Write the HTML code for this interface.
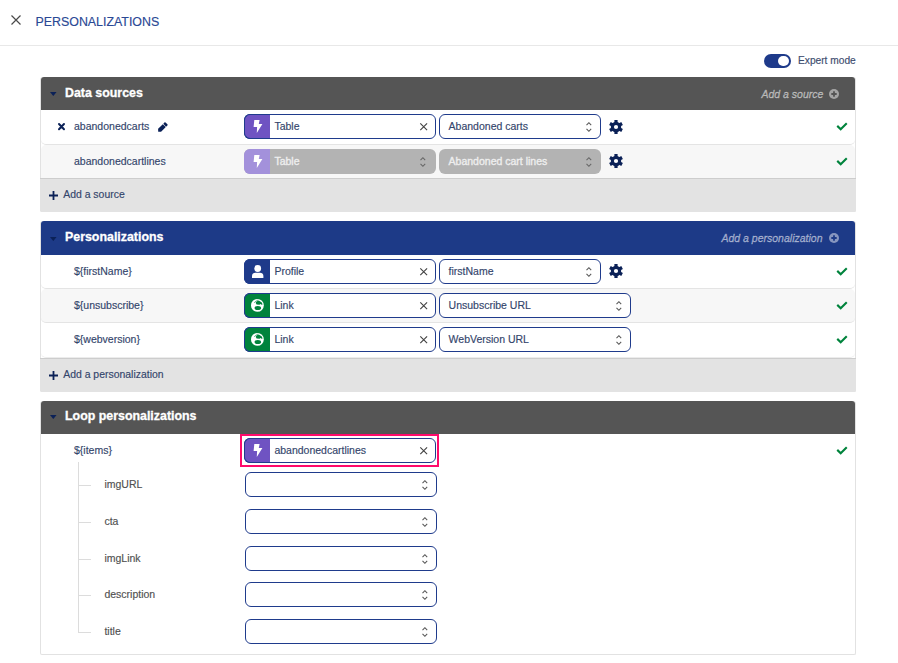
<!DOCTYPE html>
<html><head><meta charset="utf-8"><style>
html,body{margin:0;padding:0;width:898px;height:663px;overflow:hidden;background:#fff;font-family:"Liberation Sans", sans-serif;}
</style></head><body>
<svg style="position:absolute;left:11px;top:15px;overflow:visible" width="10" height="10" viewBox="0 0 10 10"><path d="M0.5 0.5L9.5 9.5M9.5 0.5L0.5 9.5" stroke="#4a4a4a" stroke-width="1.2" fill="none"/></svg>
<div style="position:absolute;left:35.5px;top:15.50px;font-size:12.4px;line-height:12.4px;color:#2a4894;font-weight:400;font-style:normal;white-space:nowrap;-webkit-text-stroke:0.15px #2a4894;">PERSONALIZATIONS</div>
<div style="position:absolute;left:0px;top:45px;width:898px;height:1px;background:#e8e8e8"></div>
<div style="position:absolute;left:764px;top:54px;width:27px;height:14px;background:#1e3a8a;border-radius:7px"></div>
<div style="position:absolute;left:778px;top:55.7px;width:10.6px;height:10.6px;background:#fff;border-radius:50%"></div>
<div style="position:absolute;left:798px;top:56.37px;font-size:10.2px;line-height:10.2px;color:#3d4c6e;font-weight:400;font-style:normal;white-space:nowrap;-webkit-text-stroke:0.15px #3d4c6e;">Expert mode</div>
<div style="position:absolute;left:40px;top:77px;width:816px;height:134.5px;box-sizing:border-box;border:1px solid #e2e2e2;border-top:0;border-radius:3px 3px 2px 2px;background:#fff"></div>
<div style="position:absolute;left:41px;top:77px;width:814px;height:33px;background:#555555;border-radius:3px 3px 0 0"></div>
<svg style="position:absolute;left:49.9px;top:92.3px;overflow:visible" width="6.6" height="3.9" viewBox="0 0 6.6 3.9"><path d="M0 0H6.6L3.3 3.9Z" fill="#0b2157"/></svg>
<div style="position:absolute;left:65px;top:86.80px;font-size:12.4px;line-height:12.4px;color:#fff;font-weight:700;font-style:normal;white-space:nowrap;-webkit-text-stroke:0.3px #fff;">Data sources</div>
<div style="position:absolute;left:761.5px;top:88.61px;font-size:10.5px;line-height:10.5px;color:rgba(255,255,255,0.47);font-weight:400;font-style:italic;white-space:nowrap;-webkit-text-stroke:0.35px rgba(255,255,255,0.47);">Add a source</div>
<svg style="position:absolute;left:829px;top:89.3px;overflow:visible" width="10" height="10" viewBox="0 0 10 10"><circle cx="5" cy="5" r="5" fill="rgba(255,255,255,0.47)"/><path d="M5 2.3V7.7M2.3 5H7.7" stroke="#555555" stroke-width="1.8"/></svg>
<div style="position:absolute;left:40px;top:178.0px;width:816px;height:33.5px;background:#e3e3e3;border-top:1px solid #cdcdcd;box-sizing:border-box;border-radius:0 0 2px 2px"></div>
<svg style="position:absolute;left:48.9px;top:190.8px;overflow:visible" width="9" height="9" viewBox="0 0 9 9"><path d="M4.5 0V9M0 4.5H9" stroke="#0b2157" stroke-width="1.8" fill="none"/></svg>
<div style="position:absolute;left:63.2px;top:190.25px;font-size:10.45px;line-height:10.45px;color:#33456b;font-weight:400;font-style:normal;white-space:nowrap;-webkit-text-stroke:0.15px #33456b;">Add a source</div>
<div style="position:absolute;left:41px;top:110.5px;width:814px;height:34px;background:#fff;border-bottom:1px solid #e4e4e4;box-sizing:border-box;border-radius:0 0 5px 5px"></div>
<svg style="position:absolute;left:58px;top:123.2px;overflow:visible" width="7" height="7.2" viewBox="0 0 7 7.2"><path d="M1 1L6 6.2M6 1L1 6.2" stroke="#0b2157" stroke-width="2.0" fill="none" stroke-linecap="round"/></svg>
<div style="position:absolute;left:74px;top:120.91px;font-size:10.5px;line-height:10.5px;color:#33456b;font-weight:400;font-style:normal;white-space:nowrap;-webkit-text-stroke:0.15px #33456b;">abandonedcarts</div>
<svg style="position:absolute;left:158px;top:121.8px;overflow:visible" width="10" height="10" viewBox="0 0 10 10"><g transform="translate(0.2 9.7) rotate(-45)"><path d="M0 0L2 -2.1H8.6V2.1H2Z" fill="#0b2157"/><rect x="9.1" y="-2.1" width="2.6" height="4.2" rx="0.8" fill="#0b2157"/></g></svg>
<div style="position:absolute;left:244px;top:114px;width:192px;height:25px;box-sizing:border-box;border:1px solid #1f3b8c;border-radius:6px;background:#fff;overflow:hidden"></div>
<div style="position:absolute;left:244px;top:114px;width:26px;height:25px;box-sizing:border-box;background:#6f53c2;border:1px solid #1f3b8c;border-right:0;border-radius:6px 0 0 6px"></div>
<div style="position:absolute;left:274.4px;top:121.11px;font-size:10.5px;line-height:10.5px;color:#33456b;font-weight:400;font-style:normal;white-space:nowrap;-webkit-text-stroke:0.15px #33456b;">Table</div>
<svg style="position:absolute;left:419.8px;top:123.1px;overflow:visible" width="7.4" height="7.4" viewBox="0 0 7.4 7.4"><path d="M0.3 0.3L7.1 7.1M7.1 0.3L0.3 7.1" stroke="#444" stroke-width="1.15" fill="none"/></svg>
<svg style="position:absolute;left:252.5px;top:120px;overflow:visible" width="9" height="13" viewBox="0 0 9 13"><path d="M1.3 0H6.6L5.8 4H9.4L3.8 12.9L4.1 7H0.6Z" fill="#fff"/></svg>
<div style="position:absolute;left:439px;top:114px;width:162px;height:25px;box-sizing:border-box;border:1px solid #1f3b8c;border-radius:6px;background:#fff"></div>
<div style="position:absolute;left:448.6px;top:121.11px;font-size:10.5px;line-height:10.5px;color:#33456b;font-weight:400;font-style:normal;white-space:nowrap;-webkit-text-stroke:0.15px #33456b;">Abandoned carts</div>
<svg style="position:absolute;left:585.5px;top:121.5px;overflow:visible" width="6" height="10" viewBox="0 0 6 10"><path d="M0.5 3.1L2.9 0.7L5.2 3.1M0.5 6.8L2.9 9.3L5.2 6.8" stroke="#555" stroke-width="1.05" fill="none"/></svg>
<svg style="position:absolute;left:609.3px;top:120px;overflow:visible" width="14" height="14" viewBox="0 0 14 14"><g transform="translate(7 7)"><rect x="-1.6" y="-7" width="3.2" height="3" transform="rotate(0)" fill="#0b2157"/><rect x="-1.6" y="-7" width="3.2" height="3" transform="rotate(60)" fill="#0b2157"/><rect x="-1.6" y="-7" width="3.2" height="3" transform="rotate(120)" fill="#0b2157"/><rect x="-1.6" y="-7" width="3.2" height="3" transform="rotate(180)" fill="#0b2157"/><rect x="-1.6" y="-7" width="3.2" height="3" transform="rotate(240)" fill="#0b2157"/><rect x="-1.6" y="-7" width="3.2" height="3" transform="rotate(300)" fill="#0b2157"/><circle r="5.2" fill="#0b2157"/><circle r="2.1" fill="#fff"/></g></svg>
<svg style="position:absolute;left:837px;top:122.7px;overflow:visible" width="10" height="8" viewBox="0 0 10 8"><path d="M1 3.6L3.7 6.2L9 1" stroke="#00833c" stroke-width="2.1" fill="none" stroke-linecap="square"/></svg>
<div style="position:absolute;left:41px;top:145px;width:814px;height:33px;background:#f7f7f7;border-radius:5px 5px 0 0"></div>
<div style="position:absolute;left:74px;top:155.81px;font-size:10.5px;line-height:10.5px;color:#33456b;font-weight:400;font-style:normal;white-space:nowrap;-webkit-text-stroke:0.15px #33456b;">abandonedcartlines</div>
<div style="position:absolute;left:244px;top:149px;width:192px;height:25px;background:#b3b3b3;border-radius:6px;overflow:hidden"></div>
<div style="position:absolute;left:244px;top:149px;width:26px;height:25px;background:#a391db;border-radius:6px 0 0 6px"></div>
<svg style="position:absolute;left:420px;top:157px;overflow:visible" width="6" height="10" viewBox="0 0 6 10"><path d="M0.5 3.1L2.9 0.7L5.2 3.1M0.5 6.8L2.9 9.3L5.2 6.8" stroke="#666" stroke-width="1.05" fill="none"/></svg>
<div style="position:absolute;left:274.4px;top:156.11px;font-size:10.5px;line-height:10.5px;color:#eeeeee;font-weight:400;font-style:normal;white-space:nowrap;-webkit-text-stroke:0.35px #eeeeee;">Table</div>
<svg style="position:absolute;left:252.5px;top:155px;overflow:visible" width="9" height="13" viewBox="0 0 9 13"><path d="M1.3 0H6.6L5.8 4H9.4L3.8 12.9L4.1 7H0.6Z" fill="#fff"/></svg>
<div style="position:absolute;left:439px;top:149px;width:162px;height:25px;background:#b3b3b3;border-radius:6px"></div>
<div style="position:absolute;left:448.6px;top:156.11px;font-size:10.5px;line-height:10.5px;color:#eeeeee;font-weight:400;font-style:normal;white-space:nowrap;-webkit-text-stroke:0.35px #eeeeee;">Abandoned cart lines</div>
<svg style="position:absolute;left:585.5px;top:156.5px;overflow:visible" width="6" height="10" viewBox="0 0 6 10"><path d="M0.5 3.1L2.9 0.7L5.2 3.1M0.5 6.8L2.9 9.3L5.2 6.8" stroke="#666" stroke-width="1.05" fill="none"/></svg>
<svg style="position:absolute;left:609.3px;top:154px;overflow:visible" width="14" height="14" viewBox="0 0 14 14"><g transform="translate(7 7)"><rect x="-1.6" y="-7" width="3.2" height="3" transform="rotate(0)" fill="#0b2157"/><rect x="-1.6" y="-7" width="3.2" height="3" transform="rotate(60)" fill="#0b2157"/><rect x="-1.6" y="-7" width="3.2" height="3" transform="rotate(120)" fill="#0b2157"/><rect x="-1.6" y="-7" width="3.2" height="3" transform="rotate(180)" fill="#0b2157"/><rect x="-1.6" y="-7" width="3.2" height="3" transform="rotate(240)" fill="#0b2157"/><rect x="-1.6" y="-7" width="3.2" height="3" transform="rotate(300)" fill="#0b2157"/><circle r="5.2" fill="#0b2157"/><circle r="2.1" fill="#fff"/></g></svg>
<svg style="position:absolute;left:837px;top:157.7px;overflow:visible" width="10" height="8" viewBox="0 0 10 8"><path d="M1 3.6L3.7 6.2L9 1" stroke="#00833c" stroke-width="2.1" fill="none" stroke-linecap="square"/></svg>
<div style="position:absolute;left:40px;top:221px;width:816px;height:170.5px;box-sizing:border-box;border:1px solid #e2e2e2;border-top:0;border-radius:3px 3px 2px 2px;background:#fff"></div>
<div style="position:absolute;left:41px;top:221px;width:814px;height:34px;background:#1d3a87;border-radius:3px 3px 0 0"></div>
<svg style="position:absolute;left:49.9px;top:236.5px;overflow:visible" width="6.6" height="3.9" viewBox="0 0 6.6 3.9"><path d="M0 0H6.6L3.3 3.9Z" fill="#0b2157"/></svg>
<div style="position:absolute;left:65px;top:230.80px;font-size:12.4px;line-height:12.4px;color:#fff;font-weight:700;font-style:normal;white-space:nowrap;-webkit-text-stroke:0.3px #fff;">Personalizations</div>
<div style="position:absolute;left:721.5px;top:232.61px;font-size:10.5px;line-height:10.5px;color:rgba(255,255,255,0.47);font-weight:400;font-style:italic;white-space:nowrap;-webkit-text-stroke:0.35px rgba(255,255,255,0.47);">Add a personalization</div>
<svg style="position:absolute;left:829px;top:233.3px;overflow:visible" width="10" height="10" viewBox="0 0 10 10"><circle cx="5" cy="5" r="5" fill="rgba(255,255,255,0.47)"/><path d="M5 2.3V7.7M2.3 5H7.7" stroke="#1d3a87" stroke-width="1.8"/></svg>
<div style="position:absolute;left:40px;top:358.0px;width:816px;height:33.5px;background:#e3e3e3;border-top:1px solid #cdcdcd;box-sizing:border-box;border-radius:0 0 2px 2px"></div>
<svg style="position:absolute;left:48.9px;top:370.8px;overflow:visible" width="9" height="9" viewBox="0 0 9 9"><path d="M4.5 0V9M0 4.5H9" stroke="#0b2157" stroke-width="1.8" fill="none"/></svg>
<div style="position:absolute;left:63.2px;top:370.25px;font-size:10.45px;line-height:10.45px;color:#33456b;font-weight:400;font-style:normal;white-space:nowrap;-webkit-text-stroke:0.15px #33456b;">Add a personalization</div>
<div style="position:absolute;left:41px;top:255px;width:814px;height:34px;background:#fff;border-bottom:1px solid #e4e4e4;box-sizing:border-box;border-radius:5px"></div>
<div style="position:absolute;left:74px;top:266.31px;font-size:10.5px;line-height:10.5px;color:#33456b;font-weight:400;font-style:normal;white-space:nowrap;-webkit-text-stroke:0.15px #33456b;">${firstName}</div>
<div style="position:absolute;left:244px;top:259px;width:192px;height:25px;box-sizing:border-box;border:1px solid #1f3b8c;border-radius:6px;background:#fff;overflow:hidden"></div>
<div style="position:absolute;left:244px;top:259px;width:26px;height:25px;box-sizing:border-box;background:#1e3a8a;border:1px solid #1f3b8c;border-right:0;border-radius:6px 0 0 6px"></div>
<div style="position:absolute;left:274.4px;top:266.11px;font-size:10.5px;line-height:10.5px;color:#33456b;font-weight:400;font-style:normal;white-space:nowrap;-webkit-text-stroke:0.15px #33456b;">Profile</div>
<svg style="position:absolute;left:419.8px;top:268.1px;overflow:visible" width="7.4" height="7.4" viewBox="0 0 7.4 7.4"><path d="M0.3 0.3L7.1 7.1M7.1 0.3L0.3 7.1" stroke="#444" stroke-width="1.15" fill="none"/></svg>
<svg style="position:absolute;left:251.8px;top:264.8px;overflow:visible" width="11.4" height="13" viewBox="0 0 11.4 13"><circle cx="5.7" cy="3.5" r="3.4" fill="#fff"/><path d="M0 13V10.8C0 8.6 1.6 7.7 3.4 7.7H8C9.8 7.7 11.4 8.6 11.4 10.8V13Z" fill="#fff"/></svg>
<div style="position:absolute;left:439px;top:259px;width:162px;height:25px;box-sizing:border-box;border:1px solid #1f3b8c;border-radius:6px;background:#fff"></div>
<div style="position:absolute;left:448.6px;top:266.11px;font-size:10.5px;line-height:10.5px;color:#33456b;font-weight:400;font-style:normal;white-space:nowrap;-webkit-text-stroke:0.15px #33456b;">firstName</div>
<svg style="position:absolute;left:585.5px;top:266.5px;overflow:visible" width="6" height="10" viewBox="0 0 6 10"><path d="M0.5 3.1L2.9 0.7L5.2 3.1M0.5 6.8L2.9 9.3L5.2 6.8" stroke="#555" stroke-width="1.05" fill="none"/></svg>
<svg style="position:absolute;left:609.3px;top:264px;overflow:visible" width="14" height="14" viewBox="0 0 14 14"><g transform="translate(7 7)"><rect x="-1.6" y="-7" width="3.2" height="3" transform="rotate(0)" fill="#0b2157"/><rect x="-1.6" y="-7" width="3.2" height="3" transform="rotate(60)" fill="#0b2157"/><rect x="-1.6" y="-7" width="3.2" height="3" transform="rotate(120)" fill="#0b2157"/><rect x="-1.6" y="-7" width="3.2" height="3" transform="rotate(180)" fill="#0b2157"/><rect x="-1.6" y="-7" width="3.2" height="3" transform="rotate(240)" fill="#0b2157"/><rect x="-1.6" y="-7" width="3.2" height="3" transform="rotate(300)" fill="#0b2157"/><circle r="5.2" fill="#0b2157"/><circle r="2.1" fill="#fff"/></g></svg>
<svg style="position:absolute;left:837px;top:267.7px;overflow:visible" width="10" height="8" viewBox="0 0 10 8"><path d="M1 3.6L3.7 6.2L9 1" stroke="#00833c" stroke-width="2.1" fill="none" stroke-linecap="square"/></svg>
<div style="position:absolute;left:41px;top:289px;width:814px;height:34px;background:#f7f7f7;border-bottom:1px solid #e4e4e4;box-sizing:border-box;border-radius:5px"></div>
<div style="position:absolute;left:74px;top:300.31px;font-size:10.5px;line-height:10.5px;color:#33456b;font-weight:400;font-style:normal;white-space:nowrap;-webkit-text-stroke:0.15px #33456b;">${unsubscribe}</div>
<div style="position:absolute;left:244px;top:293px;width:192px;height:25px;box-sizing:border-box;border:1px solid #1f3b8c;border-radius:6px;background:#fff;overflow:hidden"></div>
<div style="position:absolute;left:244px;top:293px;width:26px;height:25px;box-sizing:border-box;background:#00833c;border:1px solid #1f3b8c;border-right:0;border-radius:6px 0 0 6px"></div>
<div style="position:absolute;left:274.4px;top:300.11px;font-size:10.5px;line-height:10.5px;color:#33456b;font-weight:400;font-style:normal;white-space:nowrap;-webkit-text-stroke:0.15px #33456b;">Link</div>
<svg style="position:absolute;left:419.8px;top:302.1px;overflow:visible" width="7.4" height="7.4" viewBox="0 0 7.4 7.4"><path d="M0.3 0.3L7.1 7.1M7.1 0.3L0.3 7.1" stroke="#444" stroke-width="1.15" fill="none"/></svg>
<svg style="position:absolute;left:251.2px;top:299.1px;overflow:visible" width="12.8" height="12.8" viewBox="0 0 12.8 12.8"><circle cx="6.4" cy="6.4" r="6.4" fill="#fff"/><path d="M5 3.2L7 1.6L8.2 1.8L10.8 3.4L11.6 5.4L10.6 5.8L9.4 5L8.6 5.8L5.6 5.6L4.9 4.3Z" fill="#00833c"/><path d="M3.3 3.6L6.8 1.1" stroke="#00833c" stroke-width="0.7"/><ellipse cx="6.8" cy="9" rx="3.3" ry="2" fill="#00833c"/></svg>
<div style="position:absolute;left:439px;top:293px;width:192px;height:25px;box-sizing:border-box;border:1px solid #1f3b8c;border-radius:6px;background:#fff"></div>
<div style="position:absolute;left:448.6px;top:300.11px;font-size:10.5px;line-height:10.5px;color:#33456b;font-weight:400;font-style:normal;white-space:nowrap;-webkit-text-stroke:0.15px #33456b;">Unsubscribe URL</div>
<svg style="position:absolute;left:615.5px;top:300.5px;overflow:visible" width="6" height="10" viewBox="0 0 6 10"><path d="M0.5 3.1L2.9 0.7L5.2 3.1M0.5 6.8L2.9 9.3L5.2 6.8" stroke="#555" stroke-width="1.05" fill="none"/></svg>
<svg style="position:absolute;left:837px;top:301.7px;overflow:visible" width="10" height="8" viewBox="0 0 10 8"><path d="M1 3.6L3.7 6.2L9 1" stroke="#00833c" stroke-width="2.1" fill="none" stroke-linecap="square"/></svg>
<div style="position:absolute;left:41px;top:323px;width:814px;height:35px;background:#fff;border-bottom:1px solid #ececec;box-sizing:border-box;border-radius:5px"></div>
<div style="position:absolute;left:74px;top:334.31px;font-size:10.5px;line-height:10.5px;color:#33456b;font-weight:400;font-style:normal;white-space:nowrap;-webkit-text-stroke:0.15px #33456b;">${webversion}</div>
<div style="position:absolute;left:244px;top:327px;width:192px;height:25px;box-sizing:border-box;border:1px solid #1f3b8c;border-radius:6px;background:#fff;overflow:hidden"></div>
<div style="position:absolute;left:244px;top:327px;width:26px;height:25px;box-sizing:border-box;background:#00833c;border:1px solid #1f3b8c;border-right:0;border-radius:6px 0 0 6px"></div>
<div style="position:absolute;left:274.4px;top:334.11px;font-size:10.5px;line-height:10.5px;color:#33456b;font-weight:400;font-style:normal;white-space:nowrap;-webkit-text-stroke:0.15px #33456b;">Link</div>
<svg style="position:absolute;left:419.8px;top:336.1px;overflow:visible" width="7.4" height="7.4" viewBox="0 0 7.4 7.4"><path d="M0.3 0.3L7.1 7.1M7.1 0.3L0.3 7.1" stroke="#444" stroke-width="1.15" fill="none"/></svg>
<svg style="position:absolute;left:251.2px;top:333.1px;overflow:visible" width="12.8" height="12.8" viewBox="0 0 12.8 12.8"><circle cx="6.4" cy="6.4" r="6.4" fill="#fff"/><path d="M5 3.2L7 1.6L8.2 1.8L10.8 3.4L11.6 5.4L10.6 5.8L9.4 5L8.6 5.8L5.6 5.6L4.9 4.3Z" fill="#00833c"/><path d="M3.3 3.6L6.8 1.1" stroke="#00833c" stroke-width="0.7"/><ellipse cx="6.8" cy="9" rx="3.3" ry="2" fill="#00833c"/></svg>
<div style="position:absolute;left:439px;top:327px;width:192px;height:25px;box-sizing:border-box;border:1px solid #1f3b8c;border-radius:6px;background:#fff"></div>
<div style="position:absolute;left:448.6px;top:334.11px;font-size:10.5px;line-height:10.5px;color:#33456b;font-weight:400;font-style:normal;white-space:nowrap;-webkit-text-stroke:0.15px #33456b;">WebVersion URL</div>
<svg style="position:absolute;left:615.5px;top:334.5px;overflow:visible" width="6" height="10" viewBox="0 0 6 10"><path d="M0.5 3.1L2.9 0.7L5.2 3.1M0.5 6.8L2.9 9.3L5.2 6.8" stroke="#555" stroke-width="1.05" fill="none"/></svg>
<svg style="position:absolute;left:837px;top:335.7px;overflow:visible" width="10" height="8" viewBox="0 0 10 8"><path d="M1 3.6L3.7 6.2L9 1" stroke="#00833c" stroke-width="2.1" fill="none" stroke-linecap="square"/></svg>
<div style="position:absolute;left:40px;top:401px;width:816px;height:254px;box-sizing:border-box;border:1px solid #e2e2e2;border-top:0;border-radius:3px 3px 2px 2px;background:#fff"></div>
<div style="position:absolute;left:41px;top:401px;width:814px;height:33px;background:#555555;border-radius:3px 3px 0 0"></div>
<svg style="position:absolute;left:49.9px;top:415.2px;overflow:visible" width="6.6" height="3.9" viewBox="0 0 6.6 3.9"><path d="M0 0H6.6L3.3 3.9Z" fill="#0b2157"/></svg>
<div style="position:absolute;left:65px;top:410.10px;font-size:12.4px;line-height:12.4px;color:#fff;font-weight:700;font-style:normal;white-space:nowrap;-webkit-text-stroke:0.3px #fff;">Loop personalizations</div>
<div style="position:absolute;left:74px;top:445.11px;font-size:10.5px;line-height:10.5px;color:#33456b;font-weight:400;font-style:normal;white-space:nowrap;-webkit-text-stroke:0.15px #33456b;">${items}</div>
<div style="position:absolute;left:240px;top:434px;width:199px;height:33px;box-sizing:border-box;border:2px solid #ff0a6c"></div>
<div style="position:absolute;left:244px;top:438px;width:192px;height:25px;box-sizing:border-box;border:1px solid #1f3b8c;border-radius:6px;background:#fff;overflow:hidden"></div>
<div style="position:absolute;left:244px;top:438px;width:26px;height:25px;box-sizing:border-box;background:#6f53c2;border:1px solid #1f3b8c;border-right:0;border-radius:6px 0 0 6px"></div>
<div style="position:absolute;left:274.4px;top:445.11px;font-size:10.5px;line-height:10.5px;color:#33456b;font-weight:400;font-style:normal;white-space:nowrap;-webkit-text-stroke:0.15px #33456b;">abandonedcartlines</div>
<svg style="position:absolute;left:419.8px;top:447.1px;overflow:visible" width="7.4" height="7.4" viewBox="0 0 7.4 7.4"><path d="M0.3 0.3L7.1 7.1M7.1 0.3L0.3 7.1" stroke="#444" stroke-width="1.15" fill="none"/></svg>
<svg style="position:absolute;left:252.5px;top:444px;overflow:visible" width="9" height="13" viewBox="0 0 9 13"><path d="M1.3 0H6.6L5.8 4H9.4L3.8 12.9L4.1 7H0.6Z" fill="#fff"/></svg>
<svg style="position:absolute;left:837px;top:446.7px;overflow:visible" width="10" height="8" viewBox="0 0 10 8"><path d="M1 3.6L3.7 6.2L9 1" stroke="#00833c" stroke-width="2.1" fill="none" stroke-linecap="square"/></svg>
<div style="position:absolute;left:78px;top:462px;width:1px;height:169.5px;background:#dcdcdc"></div>
<div style="position:absolute;left:78px;top:484.8px;width:12.5px;height:1px;background:#dcdcdc"></div>
<div style="position:absolute;left:104.4px;top:478.61px;font-size:10.5px;line-height:10.5px;color:#505050;font-weight:400;font-style:normal;white-space:nowrap;-webkit-text-stroke:0.15px #505050;">imgURL</div>
<div style="position:absolute;left:245px;top:472px;width:192px;height:25px;box-sizing:border-box;border:1px solid #1f3b8c;border-radius:6px;background:#fff"></div>
<svg style="position:absolute;left:421.5px;top:479.5px;overflow:visible" width="6" height="10" viewBox="0 0 6 10"><path d="M0.5 3.1L2.9 0.7L5.2 3.1M0.5 6.8L2.9 9.3L5.2 6.8" stroke="#555" stroke-width="1.05" fill="none"/></svg>
<div style="position:absolute;left:78px;top:521.8px;width:12.5px;height:1px;background:#dcdcdc"></div>
<div style="position:absolute;left:104.4px;top:515.61px;font-size:10.5px;line-height:10.5px;color:#505050;font-weight:400;font-style:normal;white-space:nowrap;-webkit-text-stroke:0.15px #505050;">cta</div>
<div style="position:absolute;left:245px;top:509px;width:192px;height:25px;box-sizing:border-box;border:1px solid #1f3b8c;border-radius:6px;background:#fff"></div>
<svg style="position:absolute;left:421.5px;top:516.5px;overflow:visible" width="6" height="10" viewBox="0 0 6 10"><path d="M0.5 3.1L2.9 0.7L5.2 3.1M0.5 6.8L2.9 9.3L5.2 6.8" stroke="#555" stroke-width="1.05" fill="none"/></svg>
<div style="position:absolute;left:78px;top:558.8px;width:12.5px;height:1px;background:#dcdcdc"></div>
<div style="position:absolute;left:104.4px;top:552.61px;font-size:10.5px;line-height:10.5px;color:#505050;font-weight:400;font-style:normal;white-space:nowrap;-webkit-text-stroke:0.15px #505050;">imgLink</div>
<div style="position:absolute;left:245px;top:546px;width:192px;height:25px;box-sizing:border-box;border:1px solid #1f3b8c;border-radius:6px;background:#fff"></div>
<svg style="position:absolute;left:421.5px;top:553.5px;overflow:visible" width="6" height="10" viewBox="0 0 6 10"><path d="M0.5 3.1L2.9 0.7L5.2 3.1M0.5 6.8L2.9 9.3L5.2 6.8" stroke="#555" stroke-width="1.05" fill="none"/></svg>
<div style="position:absolute;left:78px;top:595.0999999999999px;width:12.5px;height:1px;background:#dcdcdc"></div>
<div style="position:absolute;left:104.4px;top:588.91px;font-size:10.5px;line-height:10.5px;color:#505050;font-weight:400;font-style:normal;white-space:nowrap;-webkit-text-stroke:0.15px #505050;">description</div>
<div style="position:absolute;left:245px;top:582.3px;width:192px;height:25px;box-sizing:border-box;border:1px solid #1f3b8c;border-radius:6px;background:#fff"></div>
<svg style="position:absolute;left:421.5px;top:589.8px;overflow:visible" width="6" height="10" viewBox="0 0 6 10"><path d="M0.5 3.1L2.9 0.7L5.2 3.1M0.5 6.8L2.9 9.3L5.2 6.8" stroke="#555" stroke-width="1.05" fill="none"/></svg>
<div style="position:absolute;left:78px;top:632.0999999999999px;width:12.5px;height:1px;background:#dcdcdc"></div>
<div style="position:absolute;left:104.4px;top:625.91px;font-size:10.5px;line-height:10.5px;color:#505050;font-weight:400;font-style:normal;white-space:nowrap;-webkit-text-stroke:0.15px #505050;">title</div>
<div style="position:absolute;left:245px;top:619.3px;width:192px;height:25px;box-sizing:border-box;border:1px solid #1f3b8c;border-radius:6px;background:#fff"></div>
<svg style="position:absolute;left:421.5px;top:626.8px;overflow:visible" width="6" height="10" viewBox="0 0 6 10"><path d="M0.5 3.1L2.9 0.7L5.2 3.1M0.5 6.8L2.9 9.3L5.2 6.8" stroke="#555" stroke-width="1.05" fill="none"/></svg>
</body></html>
